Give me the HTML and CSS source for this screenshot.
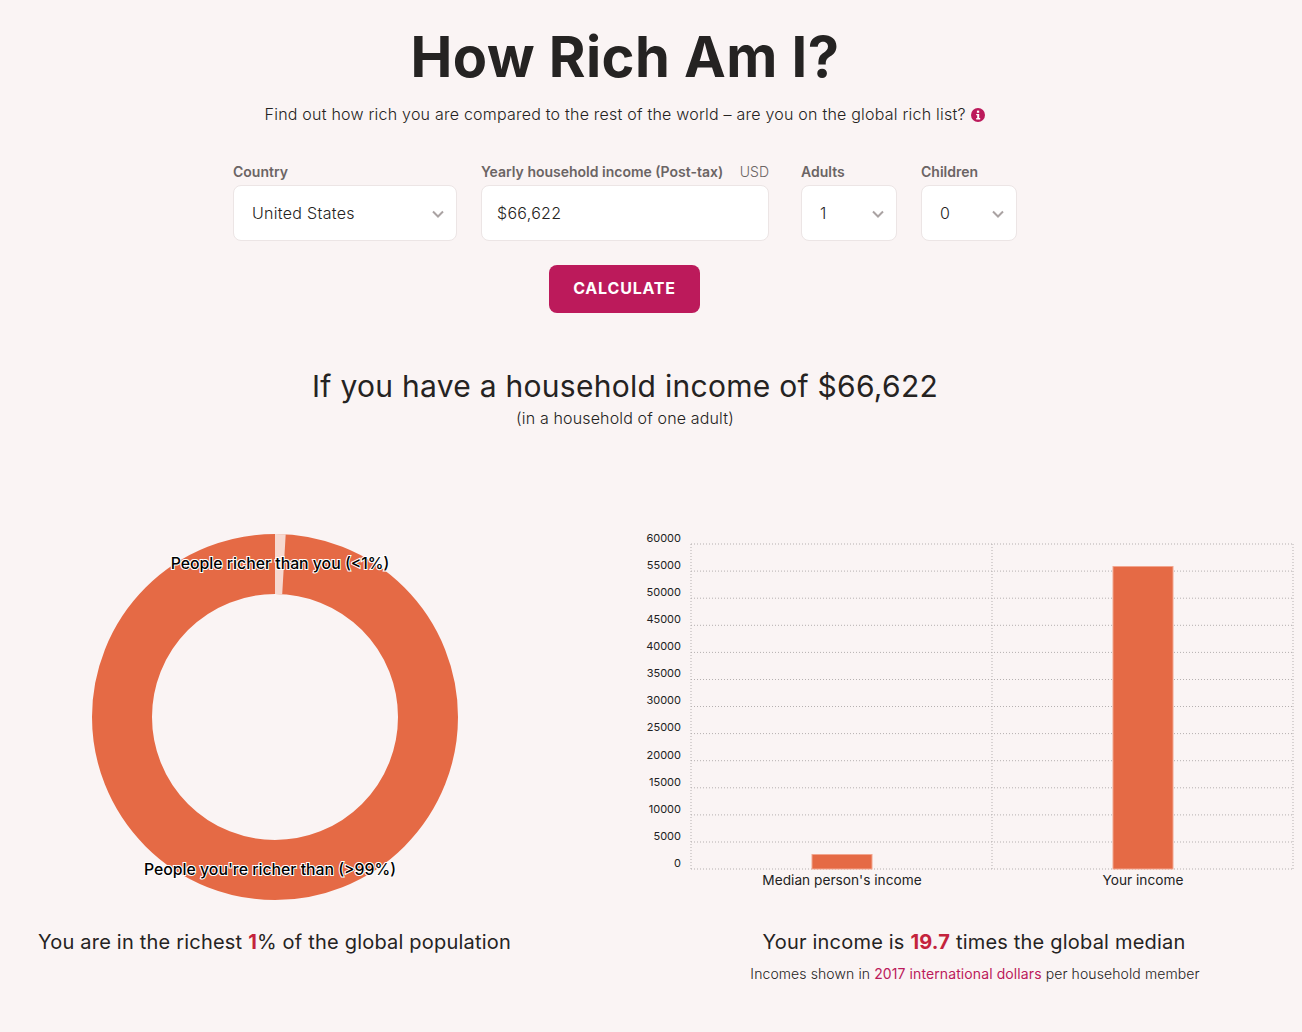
FILE: index.html
```html
<!DOCTYPE html>
<html lang="en">
<head>
    <meta charset="UTF-8">
    <title>How Rich Am I?</title>
    <link rel="stylesheet" href="styles.css">
</head>
<body>
    <div class="container">
        <h1>How Rich Am I?</h1>
        <p class="intro">Find out how rich you are compared to the rest of the world – are you on the global rich list?
            <svg class="info" width="14" height="14" viewBox="0 0 14 14"><circle cx="7" cy="7" r="7" fill="#bc1a5b"/><rect x="5.9" y="2.6" width="2.3" height="2.2" fill="#fff"/><path d="M5.2 6h3v4h1v1.4H5.2V10h1V7.3h-1z" fill="#fff"/></svg>
        </p>

        <form class="form">
            <div class="field field-country">
                <label class="label">Country</label>
                <div class="select-box">
                    <select><option>United States</option></select>
                    <svg class="chevron" width="12" height="8" viewBox="0 0 12 8"><path d="M1 1.5l5 5 5-5" fill="none" stroke="#aaa3a3" stroke-width="2"/></svg>
                </div>
            </div>
            <div class="field field-income">
                <label class="label">Yearly household income (Post-tax)<span class="unit">USD</span></label>
                <input type="text" value="$66,622">
            </div>
            <div class="field field-small field-adults">
                <label class="label">Adults</label>
                <div class="select-box">
                    <select><option>1</option></select>
                    <svg class="chevron" width="12" height="8" viewBox="0 0 12 8"><path d="M1 1.5l5 5 5-5" fill="none" stroke="#aaa3a3" stroke-width="2"/></svg>
                </div>
            </div>
            <div class="field field-small">
                <label class="label">Children</label>
                <div class="select-box">
                    <select><option>0</option></select>
                    <svg class="chevron" width="12" height="8" viewBox="0 0 12 8"><path d="M1 1.5l5 5 5-5" fill="none" stroke="#aaa3a3" stroke-width="2"/></svg>
                </div>
            </div>
        </form>
        <button class="calculate" type="button">CALCULATE</button>

        <h2>If you have a household income of $66,622</h2>
        <p class="household">(in a household of one adult)</p>

        <div class="results">
            <div class="result result-left">
                <svg class="donut" width="550" height="400" viewBox="0 0 550 400">
                    <circle cx="275" cy="200" r="153" fill="none" stroke="#e56a45" stroke-width="60"/>
                    <path d="M275 17A183 183 0 0 1 285.7 17.3L282.2 77.2A123 123 0 0 0 275 77Z" fill="#f6d9d1"/>
                    <text class="pie-label" x="280" y="52">People richer than you (&lt;1%)</text>
                    <text class="pie-label" x="270" y="358">People you're richer than (&gt;99%)</text>
                </svg>
                <p class="caption">You are in the richest <strong>1</strong>% of the global population</p>
            </div>
            <div class="result result-right">
                <svg class="bars" width="677" height="400" viewBox="0 0 677 400">
                    <g class="grid">
                        <path d="M66 27H668M66 54.1H668M66 81.2H668M66 108.3H668M66 135.4H668M66 162.5H668M66 189.5H668M66 216.6H668M66 243.7H668M66 270.8H668M66 297.9H668M66 325H668M66 352H668"/>
                        <path d="M66 27V352M367 27V352M668 27V352"/>
                    </g>
                    <g class="ticks">
                        <text x="56" y="25">60000</text>
                        <text x="56" y="52">55000</text>
                        <text x="56" y="79">50000</text>
                        <text x="56" y="106">45000</text>
                        <text x="56" y="133">40000</text>
                        <text x="56" y="160">35000</text>
                        <text x="56" y="187">30000</text>
                        <text x="56" y="214">25000</text>
                        <text x="56" y="242">20000</text>
                        <text x="56" y="269">15000</text>
                        <text x="56" y="296">10000</text>
                        <text x="56" y="323">5000</text>
                        <text x="56" y="350">0</text>
                    </g>
                    <rect class="bar" x="187" y="337.5" width="60" height="14.5"/>
                    <rect class="bar" x="488" y="49.5" width="60" height="302.5"/>
                    <text class="bar-label" x="217" y="368">Median person's income</text>
                    <text class="bar-label" x="518" y="368">Your income</text>
                </svg>
                <p class="caption">Your income is <strong>19.7</strong> times the global median</p>
                <p class="note">Incomes shown in <a href="#">2017 international dollars</a> per household member</p>
            </div>
        </div>
    </div>
</body>
</html>
```

FILE: styles.css
```css
:root {
    --bg-color: #faf4f4;
    --text-color: #252322;
    --label-color: #6b6464;
    --border-color: #ece5e5;
    --pink: #bc1a5b;
    --red: #c4233c;
}

body {
    margin: 0;
    font-family: Inter, "Liberation Sans", sans-serif;
    background-color: var(--bg-color);
    color: var(--text-color);
}

.container {
    width: 1250px;
    text-align: center;
}

h1 {
    margin: 0;
    padding-top: 24px;
    font-size: 56px;
    line-height: 66px;
    font-weight: 700;
    letter-spacing: 0.45px;
}

.intro {
    margin: 14px 0 0;
    font-size: 16px;
    line-height: 20px;
    font-weight: 300;
    letter-spacing: 0.22px;
}

.info {
    margin-left: 1px;
    vertical-align: -2px;
}

.form {
    display: flex;
    justify-content: center;
    gap: 24px;
    margin-top: 38px;
    text-align: left;
}

.field-country { width: 224px; }
.field-income { width: 288px; }
.field-small { width: 96px; }
.field-adults { margin-left: 8px; }

.label {
    display: flex;
    justify-content: space-between;
    height: 20px;
    margin-bottom: 3px;
    font-size: 14px;
    line-height: 20px;
    font-weight: 600;
    color: var(--label-color);
}

.unit {
    font-weight: 300;
}

.select-box {
    position: relative;
}

.chevron {
    position: absolute;
    right: 13px;
    top: 25px;
}

select,
input {
    display: block;
    box-sizing: border-box;
    width: 100%;
    height: 56px;
    padding: 0 18px 1px;
    font: 300 16px Inter, sans-serif;
    letter-spacing: 0.3px;
    color: var(--text-color);
    background: #fff;
    border: 1px solid var(--border-color);
    border-radius: 8px;
    appearance: none;
}

input {
    padding: 0 15px 1px;
}

.calculate {
    display: block;
    width: 151px;
    height: 48px;
    margin: 24px 0 0 549px;
    padding: 0 0 2px;
    font: 700 16px Inter, sans-serif;
    letter-spacing: 0.8px;
    color: #fff;
    background-color: var(--pink);
    border: none;
    border-radius: 8px;
    cursor: pointer;
}

h2 {
    margin: 54px 0 0;
    font-size: 30px;
    line-height: 38px;
    font-weight: 400;
    letter-spacing: 0.28px;
}

.household {
    margin: 2px 0 0;
    font-size: 16px;
    line-height: 22px;
    font-weight: 300;
    letter-spacing: 0.15px;
}

.results {
    display: grid;
    grid-template-columns: 550px 677px;
    gap: 75px;
    width: 1302px;
    margin-top: 88px;
}

.result svg {
    display: block;
}

.result-left .caption {
    margin-left: -1px;
}

.result-right .caption {
    margin-left: -1px;
    width: 700px;
}

.pie-label {
    font-size: 15.8px;
    font-weight: 500;
    text-anchor: middle;
    fill: #000;
    stroke: #fff;
    stroke-width: 2px;
    paint-order: stroke;
}

.grid path {
    fill: none;
    stroke: #b5b0b0;
    stroke-width: 1;
    stroke-dasharray: 1 2;
}

.ticks text {
    font-size: 11px;
    text-anchor: end;
    fill: #222;
}

.bar {
    fill: #e56a45;
    stroke: #f2a58e;
    stroke-width: 1;
}

.bar-label {
    font-size: 13.7px;
    text-anchor: middle;
    fill: #222;
}

.caption {
    margin: 12px 0 0;
    font-size: 20px;
    line-height: 26px;
    font-weight: 400;
    letter-spacing: 0.2px;
}

.caption strong {
    color: var(--red);
    font-weight: 700;
}

.note {
    width: 700px;
    margin: 9px 0 0;
    font-size: 14px;
    line-height: 20px;
    font-weight: 300;
    letter-spacing: 0.1px;
}

a {
    color: var(--pink);
    font-weight: 400;
    text-decoration: none;
}
```
